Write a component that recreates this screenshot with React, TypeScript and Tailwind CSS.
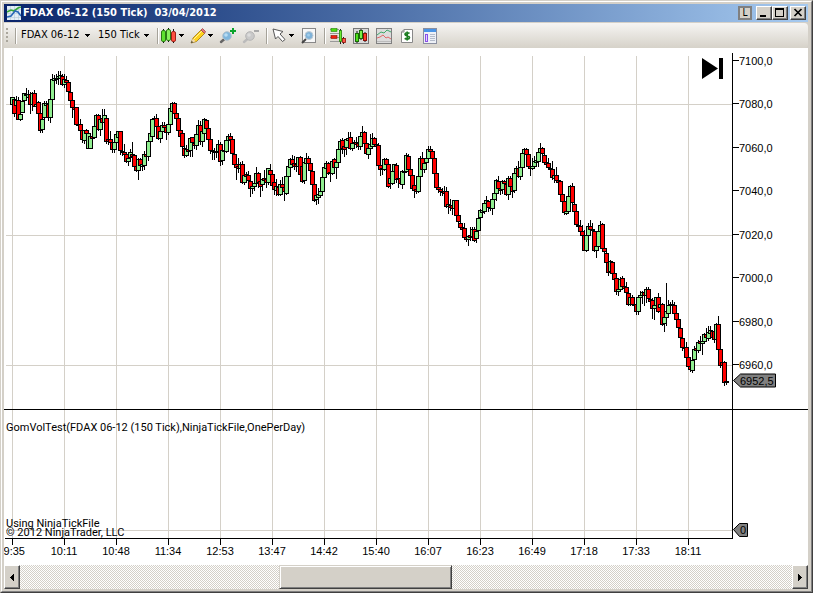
import React from "react";

// [x, high, body top, body bottom, low, rising]
type Candle = [number, number, number, number, number, 0 | 1];

const candles: Candle[] = [
    [12, 97, 97, 104, 105, 1], [14, 97, 99, 113, 116, 0], [16, 96, 100, 105, 108, 1], [18, 97, 100, 119, 119, 0],
    [20, 113, 114, 119, 120, 1], [22, 100, 101, 112, 112, 1], [24, 93, 93, 100, 101, 1], [26, 88, 94, 95, 97, 0],
    [28, 90, 94, 97, 98, 1], [30, 92, 94, 104, 113, 0], [32, 92, 93, 104, 110, 1], [34, 90, 93, 106, 106, 0],
    [36, 101, 104, 106, 112, 1], [38, 101, 102, 113, 118, 0], [40, 112, 113, 130, 132, 0], [42, 117, 119, 129, 132, 1],
    [44, 101, 103, 117, 119, 1], [46, 101, 103, 105, 112, 1], [48, 103, 104, 117, 120, 0], [50, 98, 99, 117, 122, 1],
    [52, 74, 79, 99, 99, 1], [54, 75, 78, 80, 82, 1], [56, 74, 78, 79, 83, 0], [58, 71, 76, 78, 84, 1],
    [60, 71, 75, 78, 80, 1], [62, 74, 76, 84, 85, 0], [64, 74, 79, 84, 87, 1], [66, 76, 80, 82, 84, 0],
    [68, 81, 82, 91, 92, 0], [70, 91, 92, 100, 102, 0], [72, 99, 100, 107, 117, 0], [74, 106, 107, 109, 112, 0],
    [76, 107, 107, 124, 125, 0], [78, 122, 124, 125, 129, 0], [80, 119, 124, 130, 132, 0], [82, 130, 130, 139, 142, 0],
    [84, 130, 130, 140, 143, 1], [86, 129, 130, 133, 136, 0], [88, 131, 133, 148, 148, 1], [90, 133, 136, 148, 148, 1],
    [92, 135, 136, 138, 139, 0], [94, 125, 126, 137, 138, 1], [96, 114, 115, 126, 127, 1], [98, 114, 115, 129, 130, 0],
    [100, 116, 119, 129, 135, 1], [102, 109, 118, 122, 124, 0], [104, 109, 115, 122, 124, 1], [106, 117, 118, 141, 143, 0],
    [108, 138, 139, 141, 144, 0], [110, 131, 139, 142, 144, 0], [112, 140, 142, 149, 152, 0], [114, 139, 142, 149, 152, 1],
    [116, 133, 134, 142, 143, 1], [118, 131, 131, 137, 138, 1], [120, 131, 131, 150, 154, 0], [122, 149, 151, 152, 155, 0],
    [124, 144, 152, 154, 157, 0], [126, 152, 154, 161, 162, 0], [128, 156, 158, 161, 165, 1], [130, 149, 152, 157, 158, 1],
    [132, 142, 154, 156, 158, 0], [134, 155, 155, 166, 168, 0], [136, 160, 166, 170, 171, 0], [138, 158, 159, 170, 179, 1],
    [140, 158, 159, 165, 166, 0], [142, 160, 164, 166, 170, 1], [144, 151, 154, 165, 169, 1], [146, 152, 154, 156, 158, 0],
    [148, 141, 141, 156, 160, 1], [150, 133, 133, 141, 143, 1], [152, 118, 119, 136, 138, 1], [154, 116, 118, 119, 122, 1],
    [156, 114, 118, 126, 127, 0], [158, 124, 126, 138, 139, 0], [160, 129, 131, 138, 142, 1], [162, 122, 125, 131, 133, 1],
    [164, 122, 125, 127, 132, 0], [166, 124, 127, 132, 139, 0], [168, 123, 124, 132, 134, 1], [170, 106, 108, 124, 125, 1],
    [172, 102, 103, 111, 112, 1], [174, 102, 103, 113, 114, 0], [176, 112, 113, 118, 120, 0], [178, 117, 118, 130, 131, 0],
    [180, 129, 130, 136, 138, 0], [182, 132, 133, 146, 147, 0], [184, 145, 148, 155, 157, 0], [186, 145, 149, 155, 156, 1],
    [188, 147, 149, 151, 155, 0], [190, 137, 138, 150, 156, 1], [192, 137, 137, 142, 156, 0], [194, 138, 143, 145, 148, 0],
    [196, 133, 134, 145, 149, 1], [198, 120, 125, 134, 143, 1], [200, 121, 125, 141, 144, 0], [202, 129, 131, 141, 146, 1],
    [204, 118, 119, 133, 134, 1], [206, 119, 120, 128, 130, 0], [208, 127, 128, 139, 140, 0], [210, 138, 139, 150, 153, 0],
    [212, 148, 150, 151, 159, 0], [214, 148, 151, 152, 159, 0], [216, 146, 151, 152, 157, 1], [218, 140, 144, 151, 153, 1],
    [220, 142, 144, 161, 165, 0], [222, 148, 150, 160, 164, 1], [224, 147, 150, 151, 154, 1], [226, 139, 140, 151, 152, 1],
    [228, 134, 136, 140, 143, 1], [230, 133, 136, 139, 142, 0], [232, 138, 139, 153, 155, 0], [234, 153, 154, 164, 167, 0],
    [236, 162, 164, 167, 179, 0], [238, 158, 166, 168, 172, 0], [240, 162, 164, 168, 170, 1], [242, 161, 164, 182, 183, 0],
    [244, 174, 175, 182, 184, 1], [246, 172, 174, 176, 178, 0], [248, 171, 175, 180, 184, 0], [250, 180, 181, 188, 196, 0],
    [252, 184, 186, 188, 193, 1], [254, 181, 183, 186, 190, 1], [256, 167, 173, 183, 184, 1], [258, 172, 173, 182, 187, 0],
    [260, 180, 181, 186, 196, 0], [262, 178, 179, 184, 190, 1], [264, 170, 178, 180, 184, 0], [266, 169, 179, 182, 187, 0],
    [268, 168, 168, 182, 184, 1], [270, 164, 170, 174, 175, 0], [272, 173, 174, 185, 188, 0], [274, 181, 182, 189, 194, 0],
    [276, 179, 186, 190, 195, 1], [278, 184, 187, 194, 195, 0], [280, 180, 184, 194, 195, 1], [282, 177, 184, 187, 194, 0],
    [284, 186, 187, 191, 200, 0], [286, 175, 176, 193, 194, 1], [288, 165, 166, 176, 177, 1], [290, 158, 159, 167, 169, 1],
    [292, 155, 159, 164, 167, 0], [294, 156, 163, 166, 169, 0], [296, 157, 164, 166, 171, 0], [298, 157, 157, 166, 167, 1],
    [300, 156, 157, 174, 176, 0], [302, 165, 166, 181, 182, 0], [304, 161, 162, 180, 183, 1], [306, 153, 158, 163, 165, 1],
    [308, 156, 158, 163, 165, 0], [310, 162, 163, 170, 172, 0], [312, 170, 171, 184, 185, 0], [314, 183, 184, 200, 201, 0],
    [316, 185, 195, 199, 204, 1], [318, 188, 194, 197, 203, 1], [320, 190, 191, 195, 197, 1], [322, 176, 177, 191, 192, 1],
    [324, 166, 167, 177, 178, 1], [326, 161, 163, 168, 169, 1], [328, 162, 163, 173, 174, 0], [330, 170, 172, 173, 181, 1],
    [332, 160, 161, 173, 174, 1], [334, 158, 159, 167, 169, 0], [336, 160, 162, 167, 178, 1], [338, 148, 149, 162, 163, 1],
    [340, 139, 141, 149, 162, 1], [342, 138, 140, 148, 153, 0], [344, 140, 146, 149, 156, 0], [346, 138, 139, 147, 154, 1],
    [348, 132, 138, 140, 147, 1], [350, 132, 137, 148, 149, 0], [352, 140, 143, 148, 150, 1], [354, 140, 142, 143, 146, 0],
    [356, 137, 142, 144, 147, 0], [358, 138, 143, 146, 149, 0], [360, 134, 136, 146, 149, 1], [362, 126, 132, 136, 138, 1],
    [364, 131, 132, 143, 144, 0], [366, 142, 143, 153, 154, 0], [368, 145, 148, 154, 158, 1], [370, 134, 144, 148, 150, 1],
    [372, 133, 138, 146, 148, 1], [374, 137, 138, 144, 146, 0], [376, 142, 144, 146, 148, 0], [378, 143, 145, 165, 166, 0],
    [380, 164, 165, 169, 175, 0], [382, 165, 168, 169, 174, 1], [384, 158, 159, 169, 170, 1], [386, 158, 159, 164, 165, 0],
    [388, 163, 164, 186, 187, 0], [390, 176, 178, 183, 188, 1], [392, 170, 171, 183, 184, 1], [394, 164, 164, 171, 172, 1],
    [396, 163, 165, 179, 182, 0], [398, 176, 178, 179, 187, 0], [400, 177, 178, 183, 184, 0], [402, 170, 171, 184, 188, 1],
    [404, 170, 171, 172, 174, 0], [406, 153, 155, 171, 172, 1], [408, 154, 156, 169, 171, 0], [410, 168, 169, 175, 177, 0],
    [412, 174, 175, 188, 190, 0], [414, 183, 185, 190, 197, 0], [416, 186, 189, 191, 193, 0], [418, 175, 176, 191, 192, 1],
    [420, 156, 158, 176, 177, 1], [422, 152, 158, 169, 170, 0], [424, 160, 163, 169, 172, 1], [426, 157, 158, 162, 168, 1],
    [428, 146, 149, 158, 160, 1], [430, 146, 149, 151, 158, 0], [432, 150, 151, 158, 159, 0], [434, 157, 158, 173, 174, 0],
    [436, 172, 173, 187, 189, 0], [438, 186, 187, 189, 192, 0], [440, 188, 189, 191, 195, 0], [442, 188, 191, 192, 195, 0],
    [444, 186, 191, 193, 196, 0], [446, 187, 191, 206, 207, 0], [448, 201, 204, 206, 213, 1], [450, 199, 205, 207, 210, 0],
    [452, 203, 205, 208, 214, 0], [454, 200, 200, 208, 210, 1], [456, 200, 200, 215, 216, 0], [458, 214, 215, 221, 224, 0],
    [460, 221, 223, 227, 229, 0], [462, 224, 227, 229, 230, 0], [464, 223, 228, 237, 239, 0], [466, 236, 237, 239, 241, 0],
    [468, 235, 236, 239, 245, 1], [470, 227, 235, 237, 240, 0], [472, 227, 229, 236, 240, 1], [474, 227, 229, 240, 241, 0],
    [476, 229, 231, 238, 242, 1], [478, 217, 218, 230, 232, 1], [480, 209, 210, 217, 230, 1], [482, 208, 210, 212, 215, 1],
    [484, 200, 203, 211, 213, 1], [486, 196, 200, 203, 207, 1], [488, 200, 201, 207, 211, 0], [490, 200, 207, 208, 210, 1],
    [492, 198, 199, 208, 214, 1], [494, 192, 193, 199, 201, 1], [496, 179, 180, 193, 200, 1], [498, 176, 181, 188, 190, 0],
    [500, 181, 188, 190, 194, 0], [502, 180, 181, 189, 193, 1], [504, 180, 181, 183, 190, 0], [506, 182, 184, 194, 195, 0],
    [508, 176, 178, 194, 199, 1], [510, 176, 178, 186, 188, 0], [512, 185, 186, 191, 197, 0], [514, 172, 173, 190, 192, 1],
    [516, 166, 168, 173, 176, 1], [518, 161, 168, 176, 177, 0], [520, 166, 167, 176, 179, 1], [522, 152, 153, 167, 168, 1],
    [524, 148, 149, 153, 156, 1], [526, 148, 149, 154, 157, 0], [528, 153, 154, 166, 168, 0], [530, 163, 166, 168, 175, 0],
    [532, 158, 166, 168, 169, 1], [534, 156, 161, 166, 168, 1], [536, 155, 160, 162, 165, 1], [538, 151, 152, 161, 166, 1],
    [540, 143, 148, 152, 154, 1], [542, 147, 148, 153, 155, 0], [544, 153, 155, 162, 164, 0], [546, 158, 162, 164, 167, 0],
    [548, 158, 163, 167, 169, 0], [550, 165, 168, 169, 172, 0], [552, 161, 169, 177, 179, 0], [554, 172, 175, 178, 182, 1],
    [556, 167, 175, 180, 182, 0], [558, 178, 180, 182, 183, 0], [560, 180, 181, 194, 195, 0], [562, 193, 194, 201, 203, 0],
    [564, 200, 201, 212, 214, 0], [566, 208, 211, 213, 214, 1], [568, 195, 196, 211, 213, 1], [570, 185, 186, 196, 197, 1],
    [572, 183, 186, 202, 204, 0], [574, 202, 204, 211, 212, 0], [576, 210, 211, 224, 225, 0], [578, 223, 225, 226, 228, 0],
    [580, 220, 226, 231, 233, 0], [582, 225, 231, 235, 237, 0], [584, 230, 235, 250, 250, 0], [586, 234, 235, 250, 251, 1],
    [588, 223, 226, 235, 236, 1], [590, 220, 226, 229, 232, 0], [592, 223, 229, 230, 233, 0], [594, 230, 231, 250, 251, 0],
    [596, 243, 246, 250, 257, 1], [598, 226, 231, 246, 250, 1], [600, 221, 225, 231, 235, 1], [602, 223, 224, 248, 249, 0],
    [604, 246, 248, 251, 254, 0], [606, 252, 253, 262, 264, 0], [608, 261, 262, 272, 275, 0], [610, 260, 261, 271, 273, 1],
    [612, 261, 262, 273, 275, 0], [614, 272, 273, 279, 281, 0], [616, 276, 278, 291, 294, 0], [618, 287, 289, 291, 295, 1],
    [620, 277, 279, 289, 291, 1], [622, 276, 278, 286, 288, 0], [624, 285, 286, 288, 292, 0], [626, 282, 287, 292, 295, 0],
    [628, 291, 293, 304, 305, 0], [630, 296, 297, 304, 305, 1], [632, 295, 297, 304, 305, 0], [634, 302, 304, 305, 308, 0],
    [636, 303, 304, 311, 314, 0], [638, 296, 297, 311, 314, 1], [640, 291, 295, 297, 303, 1], [642, 291, 292, 295, 303, 1],
    [644, 291, 292, 295, 305, 0], [646, 287, 289, 295, 302, 1], [648, 287, 289, 298, 300, 0], [650, 297, 299, 301, 304, 0],
    [652, 298, 300, 308, 318, 0], [654, 300, 305, 308, 319, 1], [656, 297, 297, 305, 308, 1], [658, 293, 297, 311, 312, 0],
    [660, 303, 304, 307, 312, 1], [662, 303, 304, 324, 325, 0], [664, 312, 317, 323, 331, 1], [666, 283, 311, 317, 325, 1],
    [668, 300, 305, 313, 316, 1], [670, 302, 304, 305, 310, 1], [672, 300, 304, 305, 310, 0], [674, 302, 305, 313, 315, 0],
    [676, 312, 313, 319, 321, 0], [678, 318, 319, 327, 329, 0], [680, 327, 328, 337, 339, 0], [682, 337, 338, 347, 350, 0],
    [684, 345, 347, 348, 353, 0], [686, 342, 347, 357, 359, 0], [688, 356, 357, 366, 368, 0], [690, 360, 366, 369, 371, 0],
    [692, 359, 360, 370, 372, 1], [694, 346, 349, 359, 361, 1], [696, 345, 348, 350, 354, 0], [698, 340, 342, 350, 352, 1],
    [700, 336, 341, 343, 348, 0], [702, 334, 341, 343, 354, 1], [704, 333, 334, 341, 343, 1], [706, 328, 334, 337, 341, 0],
    [708, 326, 332, 338, 340, 1], [710, 326, 330, 333, 338, 1], [712, 330, 331, 337, 339, 0], [714, 329, 331, 339, 342, 0],
    [716, 323, 324, 339, 341, 1], [718, 316, 324, 349, 350, 0], [720, 347, 349, 365, 367, 0], [722, 360, 362, 365, 369, 0],
    [724, 361, 362, 382, 385, 0], [726, 381, 381, 382, 384, 0],
];

const prices = [
    { label: "7100,0", y: 61 },
    { label: "7080,0", y: 104 },
    { label: "7060,0", y: 148 },
    { label: "7040,0", y: 191 },
    { label: "7020,0", y: 235 },
    { label: "7000,0", y: 278 },
    { label: "6980,0", y: 322 },
    { label: "6960,0", y: 365 },
];

const times = ["9:35", "10:11", "10:48", "11:34", "12:53", "13:47", "14:42", "15:40", "16:07", "16:23", "16:49", "17:18", "17:33", "18:11"];

const Caret = () => (
    <svg width="7" height="4" viewBox="0 0 7 4" shapeRendering="crispEdges">
        <path d="M1 0h5v1H1zM2 1h3v1H2zM3 2h1v1H3z" />
    </svg>
);

const Separator = ({ className }: { className: string }) => (
    <div className={`h-4 w-0.5 shrink-0 border-l border-[#a5a299] bg-white ${className}`} />
);

const Bars = () => (
    <svg width="16" height="16" viewBox="0 0 16 16">
        <path d="M2.500 1v14M7.500 0v14M12.500 1v14" stroke="#111" />
        <rect x="0.500" y="2.500" width="4" height="11" rx="1.500" fill="#5ee030" stroke="#2a7a14" />
        <rect x="5.500" y="1.500" width="4" height="11" rx="1.500" fill="#86f05c" stroke="#2a7a14" />
        <rect x="10.500" y="3.500" width="4" height="10" rx="1.500" fill="#ff5040" stroke="#9b2218" />
    </svg>
);

const Pencil = () => (
    <svg width="16" height="16" viewBox="0 0 16 16">
        <path d="M1 15l2-5 8-8 3.500 3.500-8 8z" fill="#ffd21c" stroke="#9a7410" strokeWidth="0.800" />
        <path d="M4 11l8-8" stroke="#fff3a0" />
        <path d="M11 2l1.500-1.500L15.500 3.500 14.500 5.500z" fill="#e87878" stroke="#a04a4a" strokeWidth="0.800" />
        <path d="M1 15l1.800-4.500 2.900 2.800z" fill="#f0d9b0" />
        <path d="M1 15l.8-2 1.300 1.200z" fill="#222" />
    </svg>
);

const Lens = ({ kind }: { kind: "in" | "out" }) => (
    <svg width="18" height="16" viewBox="0 0 18 16">
        <path d="M2 14l4-3.500" stroke={kind === "in" ? "#666" : "#bbb"} strokeWidth="2.400" strokeLinecap="round" />
        <circle cx="8" cy="8" r="4.300" fill={kind === "in" ? "#7fb6dc" : "#c9c9c9"} stroke={kind === "in" ? "#b4c2cc" : "#b5b5b5"} />
        <circle cx="7" cy="7" r="1.800" fill={kind === "in" ? "#b9dcf3" : "#dcdcdc"} />
        {kind === "in" ? <path d="M11 3h6M14 0v6" stroke="#0aa42c" strokeWidth="2" /> : <path d="M12 3h5" stroke="#a9a9a9" strokeWidth="2" />}
    </svg>
);

const Cursor = () => (
    <svg width="14" height="15" viewBox="0 0 14 15">
        <path d="M1 1l10 2.500-3 2.500 5 5.500-2.500 2L6 8.500 3.500 11z" fill="#fff" stroke="#555" />
    </svg>
);

const FramedLens = () => (
    <svg width="16" height="16" viewBox="0 0 16 16">
        <rect x="1.500" y="0.500" width="13" height="14" fill="#f7f7f7" stroke="#888" />
        <path d="M1 15l4-4" stroke="#444" strokeWidth="2" />
        <circle cx="8" cy="7.500" r="4" fill="#7fb2d8" stroke="#c3cdd4" />
        <circle cx="7.500" cy="7" r="1.500" fill="#9fcdec" />
    </svg>
);

const Depth = () => (
    <svg width="16" height="16" viewBox="0 0 16 16">
        <path d="M0 1.500h9M0 5.500h9M0 9.500h9M0 13.500h9" stroke="#999" />
        <rect x="1" y="0.500" width="6" height="3" fill="#48dc10" stroke="#238008" strokeWidth="0.600" />
        <rect x="1" y="7.500" width="6" height="3" fill="#f02010" stroke="#8b1208" strokeWidth="0.600" />
        <path d="M10.500 1v15M13.500 9v7" stroke="#222" />
        <rect x="9.500" y="2.500" width="2" height="11" fill="#6dec30" stroke="#238008" strokeWidth="0.800" />
        <rect x="12.500" y="10.500" width="3" height="4" fill="#ff5a48" stroke="#8b1208" strokeWidth="0.800" />
    </svg>
);

const FramedBars = () => (
    <svg width="16" height="16" viewBox="0 0 16 16">
        <rect x="0.500" y="0.500" width="15" height="15" fill="#d9d9d9" stroke="#777" />
        <path d="M4 3v12M8 1v11M12 4v10" stroke="#111" />
        <rect x="2.500" y="5.500" width="3" height="8" fill="#4fe01c" stroke="#1b6a08" />
        <rect x="6.500" y="2.500" width="3" height="8" fill="#7af04a" stroke="#1b6a08" />
        <rect x="10.500" y="5.500" width="3" height="7" fill="#ff3b2b" stroke="#8b1208" />
    </svg>
);

const FramedLines = () => (
    <svg width="16" height="16" viewBox="0 0 16 16">
        <rect x="0.500" y="0.500" width="15" height="15" fill="#dcdcdc" stroke="#808080" />
        <path d="M1 7l4-3 3 1 3-3 4 2" fill="none" stroke="#3ea868" />
        <path d="M1 10l3-1 3-2 3 3 2-1 3 2" fill="none" stroke="#e06868" />
        <path d="M1 13.500h14" stroke="#bbb" />
    </svg>
);

const Dollar = () => (
    <svg width="16" height="16" viewBox="0 0 16 16">
        <path d="M5 1.500h8.500v13h-11V4z" fill="#fff" stroke="#888" />
        <path d="M2.500 4H5V1.500" fill="none" stroke="#888" />
        <path d="M10.500 5.500C9 4.300 6 4.500 6 6.300c0 2 4.500 1.200 4.500 3.200 0 1.900-3.200 2-4.800.8M8.200 3.500v9" fill="none" stroke="#1d7d22" strokeWidth="1.700" />
    </svg>
);

const Properties = () => (
    <svg width="16" height="16" viewBox="0 0 16 16">
        <rect x="1.500" y="0.500" width="13" height="15" fill="#eef1f7" stroke="#8a8fa0" />
        <rect x="2" y="1" width="12" height="3" fill="#4a94e6" />
        <rect x="3.500" y="6.500" width="2" height="7" fill="#e2d4ff" stroke="#8a4fe8" />
        <path d="M8 6.500h5M8 8.500h5M8 10.500h5M8 12.500h5" stroke="#b4bccb" />
    </svg>
);

interface ToolProps {
    label: string;
    className: string;
    children: React.ReactNode;
}

const Tool: React.FC<ToolProps> = ({ label, className, children }) => (
    <button aria-label={label} className={`flex h-5 shrink-0 items-center justify-between ${className}`}>
        {children}
    </button>
);

interface WindowButtonProps {
    label: string;
    className?: string;
    children: React.ReactNode;
}

const WindowButton: React.FC<WindowButtonProps> = ({ label, className = "", children }) => (
    <button
        aria-label={label}
        className={`h-[14px] w-4 border border-t-white border-r-[#404040] border-b-[#404040] border-l-white bg-[#d4d0c8] shadow-[inset_-1px_-1px_#808080] ${className}`}
    >
        <svg width="14" height="12" viewBox="0 0 14 12">{children}</svg>
    </button>
);

const TitleBar = () => (
    <header className="flex h-[18px] items-center bg-linear-to-r from-[#0a246a] to-[#a6caf0] pr-0.5 pl-[3px]">
        <svg width="14" height="14" viewBox="0 0 14 14">
            <rect width="14" height="14" fill="#e4eef5" />
            <path d="M0 3.500h14M0 7.500h14M0 11.500h14M3.500 0v14M7.500 0v14M11.500 0v14" stroke="#b4cbd8" strokeWidth="0.600" />
            <path d="M0 6l4-2 3 1 4-3 3-1" fill="none" stroke="#38a838" strokeWidth="1.600" />
            <path d="M0 11l4-1 4-5 3 1 3 4" fill="none" stroke="#2868b8" strokeWidth="1.600" />
        </svg>
        <h1 className="ml-0.5 flex-1 text-[11px] leading-[18px] font-bold whitespace-pre text-white">FDAX 06-12 (150 Tick)  03/04/2012</h1>
        <button className="mr-1 flex h-[14px] w-[14px] items-center justify-center border-2 border-[#808080] bg-[#d4d0c8] text-[10px] leading-none">L</button>
        <WindowButton label="Minimize">
            <path d="M3 8h6v2H3z" />
        </WindowButton>
        <WindowButton label="Maximize" className="mr-0.5">
            <path d="M2 1h9v9H2zM3 3v6h7V3z" fillRule="evenodd" />
        </WindowButton>
        <WindowButton label="Close">
            <path d="M3.500 2l7 7M10.500 2l-7 7" stroke="#000" strokeWidth="1.700" />
        </WindowButton>
    </header>
);

const Toolbar = () => (
    <nav className="mt-px flex h-[25px] items-center overflow-hidden rounded-r-sm bg-linear-to-b from-[#f6f5f3] to-[#d6d2c9] text-[11px]">
        <svg width="3" height="15" viewBox="0 0 3 15" className="ml-0.5 shrink-0" shapeRendering="crispEdges">
            <path d="M0 0h2v2H0zM0 4h2v2H0zM0 8h2v2H0zM0 12h2v2H0z" fill="#aaa69c" />
        </svg>
        <Separator className="ml-1.5" />
        <Tool label="Instrument" className="ml-1 w-[70px] whitespace-nowrap">FDAX 06-12<Caret /></Tool>
        <Tool label="Period" className="ml-[7px] w-[52px] whitespace-nowrap">150 Tick<Caret /></Tool>
        <Separator className="ml-[7px]" />
        <Tool label="Chart style" className="ml-0.5 w-6"><Bars /><Caret /></Tool>
        <Tool label="Drawing tools" className="ml-[5px] w-6"><Pencil /><Caret /></Tool>
        <Tool label="Zoom in" className="ml-[5px] w-[18px]"><Lens kind="in" /></Tool>
        <Tool label="Zoom out" className="ml-[5px] w-[18px]"><Lens kind="out" /></Tool>
        <Separator className="ml-1.5" />
        <Tool label="Pointer" className="ml-1 w-[23px]"><Cursor /><Caret /></Tool>
        <Tool label="Data box" className="ml-1.5 w-4"><FramedLens /></Tool>
        <Separator className="ml-[7px]" />
        <div className="ml-1 flex gap-[7px]">
            <Tool label="Chart trader" className="w-4"><Depth /></Tool>
            <Tool label="Data series" className="w-4"><FramedBars /></Tool>
            <Tool label="Indicators" className="w-4"><FramedLines /></Tool>
            <Tool label="Strategies" className="w-4"><Dollar /></Tool>
            <Tool label="Properties" className="w-4"><Properties /></Tool>
        </div>
    </nav>
);

const Chart = () => (
    <main className="relative bg-white">
        <svg viewBox="4 48 804 517" className="block h-auto w-full font-['Liberation_Sans',Arial,sans-serif] text-[11px]">
            <g shapeRendering="crispEdges">
                {times.map((time, i) => (
                    <path key={time} d={`M${12.5 + i * 52} 56V538`} stroke="#d4d0c8" />
                ))}
                {[104, 235, 365, 530].map((y) => (
                    <path key={y} d={`M6 ${y + 0.5}H732`} stroke="#d4d0c8" />
                ))}
                {candles.map(([x, high, top, bottom, low, up]) => (
                    <g key={x} stroke="#000">
                        <path d={`M${x + 0.5} ${high}V${low + 1}`} />
                        <rect x={x - 1.5} y={top + 0.5} width="4" height={bottom - top} fill={up ? "#90ee90" : "#ff0000"} />
                    </g>
                ))}
                <path d="M732.5 53V539M5 538.5H733M4 409.5H808" stroke="#000" />
                {prices.map(({ y }) => (
                    <path key={y} d={`M733 ${y - 0.5}h6`} stroke="#000" />
                ))}
                {times.map((time, i) => (
                    <path key={time} d={`M${12.5 + i * 52} 539v6`} stroke="#000" />
                ))}
            </g>
            {prices.map(({ label, y }) => (
                <text key={label} x="739" y={y + 4}>{label}</text>
            ))}
            {times.map((time, i) => (
                <text key={time} x={i === 0 ? 25 : 12 + i * 52} y="555" textAnchor={i === 0 ? "end" : "middle"}>{time}</text>
            ))}
            <path d="M733.5 380.5l7-6.500h35v13h-35z" fill="#808080" stroke="#000" />
            <text x="740" y="385">6952,5</text>
            <path d="M733.5 529.500l6-6h8v13h-8z" fill="#808080" stroke="#000" />
            <text x="740" y="534">0</text>
            <g className="font-[Roboto,'Liberation_Sans',sans-serif]">
                <text x="6" y="431">GomVolTest(FDAX 06-12 (150 Tick),NinjaTickFile,OnePerDay)</text>
                <text x="6" y="527">Using NinjaTickFile</text>
                <text x="6" y="536">© 2012 NinjaTrader, LLC</text>
            </g>
        </svg>
        <button aria-label="Go to last bar" className="absolute top-2.5 right-[85px]">
            <svg width="21" height="21" viewBox="0 0 21 21">
                <path d="M0 0l16 10.500L0 21zM17 0h4v21h-4z" />
            </svg>
        </button>
    </main>
);

const ScrollButton = ({ label, d }: { label: string; d: string }) => (
    <button aria-label={label} className="flex w-4 shrink-0 items-center justify-center border border-t-white border-r-[#404040] border-b-[#404040] border-l-white bg-[#d4d0c8] shadow-[inset_-1px_-1px_#808080]">
        <svg width="4" height="7" viewBox="0 0 4 7" shapeRendering="crispEdges">
            <path d={d} />
        </svg>
    </button>
);

const ScrollBar = () => (
    <footer className="flex h-6 bg-[repeating-conic-gradient(#d4d0c8_0_25%,#ffffff_0_50%)] bg-size-[2px_2px]">
        <ScrollButton label="Scroll left" d="M4 0v7L0 3.500z" />
        <div className="flex flex-1">
            <div className="w-[33.6%]" />
            <div role="scrollbar" aria-label="Time range" aria-controls="root" aria-valuenow={44} className="w-[22.4%] border border-t-[#d4d0c8] border-r-[#404040] border-b-[#404040] border-l-[#d4d0c8] bg-[#d4d0c8] shadow-[inset_1px_1px_#fff,inset_-1px_-1px_#808080]" />
        </div>
        <ScrollButton label="Scroll right" d="M0 0v7L4 3.500z" />
    </footer>
);

export default function App() {
    return (
        <div className="border border-t-[#d4d0c8] border-r-[#404040] border-b-[#404040] border-l-[#d4d0c8] bg-[#d4d0c8] font-['DejaVu_Sans_Condensed','DejaVu_Sans',Tahoma,sans-serif] text-black">
            <div className="border border-t-white border-r-[#808080] border-b-[#808080] border-l-white p-0.5 pr-[3px]">
                <TitleBar />
                <Toolbar />
                <Chart />
                <ScrollBar />
            </div>
        </div>
    );
}
